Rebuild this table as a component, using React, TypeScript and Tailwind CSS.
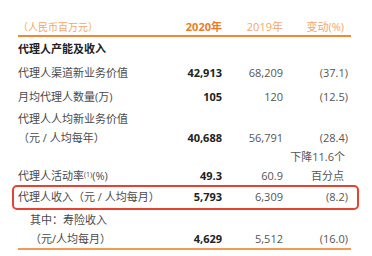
import React from "react";

const font = { fontFamily: '"Open Sans","Noto Sans CJK SC",sans-serif' };

function Nums({ a, b, c }: { a: string; b: string; c: string }) {
  return (
    <>
      <div className="w-[54px] shrink-0 text-right font-bold text-[#222]">{a}</div>
      <div className="w-[61px] shrink-0 text-right text-[#555]">{b}</div>
      <div className="w-[65px] shrink-0 text-right text-[#555]">{c}</div>
    </>
  );
}

export default function App() {
  return (
    <div className="w-[372px] h-[256px] bg-white overflow-hidden text-[11px]" style={font}>
      <div className="ml-[18px] w-[333px] pt-[19px]">
        {/* header */}
        <div className="flex h-[16px] items-center leading-[16px]">
          <div className="w-[150px] shrink-0 text-[10px] text-[#f5a56b]">（人民币百万元）</div>
          <div className="w-[54px] shrink-0 text-right font-bold text-[#ee7a26]">2020年</div>
          <div className="w-[61px] shrink-0 text-right text-[#f5a56b]">2019年</div>
          <div className="w-[61px] shrink-0 text-right text-[#f5a56b]">变动(%)</div>
        </div>
        <div className="h-[2px] bg-[#f0883a]" />
        {/* section */}
        <div className="flex h-[24px] items-center font-bold text-[#222]">代理人产能及收入</div>
        <div className="flex h-[24px] items-center text-[#4a4a4a]">
          <div className="w-[150px] shrink-0">代理人渠道新业务价值</div>
          <Nums a="42,913" b="68,209" c="(37.1)" />
        </div>
        <div className="flex h-[24px] items-center text-[#4a4a4a]">
          <div className="w-[150px] shrink-0">月均代理人数量(万)</div>
          <Nums a="105" b="120" c="(12.5)" />
        </div>
        <div className="flex items-end leading-[19px] text-[#4a4a4a]">
          <div className="w-[150px] shrink-0">
            <div>代理人人均新业务价值</div>
            <div>（元 / 人均每年）</div>
          </div>
          <Nums a="40,688" b="56,791" c="(28.4)" />
        </div>
        <div className="flex items-end leading-[19px] text-[#4a4a4a]">
          <div className="w-[150px] shrink-0">
            代理人活动率<sup className="text-[7px]">(1)</sup>(%)
          </div>
          <div className="w-[54px] shrink-0 text-right font-bold text-[#222]">49.3</div>
          <div className="w-[61px] shrink-0 text-right text-[#555]">60.9</div>
          <div className="w-[65px] shrink-0 text-right text-[#555] pr-[3px]">
            <div>下降11.6个</div>
            <div className="pr-[1px]">百分点</div>
          </div>
        </div>
        <div className="-ml-[6px] w-[347px] h-[25px] flex items-center border-2 border-[#e8412f] rounded-[5px] pl-[4px] text-[#4a4a4a]">
          <div className="w-[150px] shrink-0">代理人收入（元 / 人均每月）</div>
          <Nums a="5,793" b="6,309" c="(8.2)" />
        </div>
        <div className="flex items-end leading-[19px] text-[#4a4a4a]">
          <div className="w-[150px] shrink-0 pl-[12px]">
            <div>其中：寿险收入</div>
            <div>（元/人均每月）</div>
          </div>
          <Nums a="4,629" b="5,512" c="(16.0)" />
        </div>
        <div className="h-[2px] bg-[#f39a55] mt-[0px]" />
      </div>
    </div>
  );
}
